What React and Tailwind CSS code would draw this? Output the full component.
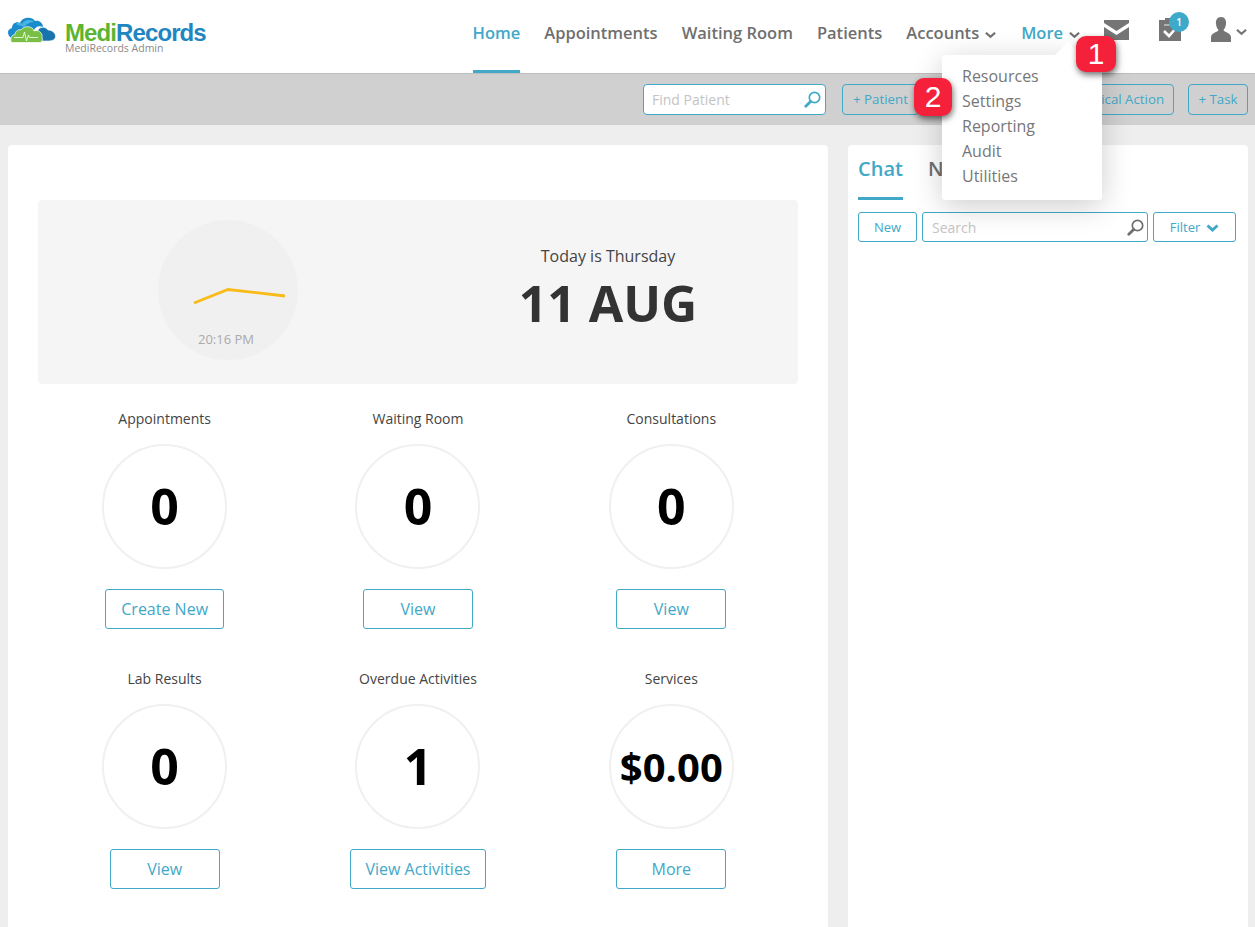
import React from "react";

const Chevron = ({ className = "", sw = 2.4 }) => (
  <svg viewBox="0 0 12 8" className={className} fill="none" stroke="currentColor" strokeWidth={sw}>
    <path d="M1 1.5 L6 6 L11 1.5" />
  </svg>
);

const Magnifier = ({ color, className = "" }) => (
  <svg viewBox="0 0 17 17" className={className} fill="none">
    <circle cx="10.5" cy="6.5" r="5.2" stroke={color} strokeWidth="1.7" />
    <path d="M6.6 10.4 L1.8 15.2" stroke={color} strokeWidth="2.8" strokeLinecap="round" />
  </svg>
);

const Logo = () => (
  <div className="flex items-start w-[206px] shrink-0">
    <svg viewBox="0 0 48 26" className="w-[48px] h-[26px] ml-[8px] mt-[17px] shrink-0">
      <path d="M30 13 C33 9 38 10 40 13 C44 13 48 16 47.5 20 C47 23 44 24 40 24 L28 24Z" fill="#1774ad" stroke="#fff" strokeWidth="0.6" />
      <path d="M1 19 C-1 15 0 12 4 11 C4 6 9 4 12 6 C14 0 24 -1 27 4 C31 3 35 6 35 10 C30 8 27 11 26 13 L8 21 L3 21Z" fill="#1b8ccb" />
      <path d="M8 7 C11 5 13 6 14 7 C16 2 24 2 26 5 C22 5 18 7 16 10 C13 8 10 9 8 7Z" fill="#49b4e4" />
      <path d="M4 25.5 C2 25 2 18 7 17.5 C7 14 11 12 13 13 C16 8 25 9 26 14 C30 12 35 16 34 20 C35 23 34 25.5 32 25.5Z" fill="#7abf45" stroke="#fff" strokeWidth="0.7" />
      <path d="M6 20.5 H13 L15 20.5 L16.5 15 L18.5 24 L20.5 18 L21.5 20.5 H30" fill="none" stroke="#eef8e6" strokeWidth="0.9" />
    </svg>
    <div className="ml-[9px] mt-[20px]">
      <div className="font-['Liberation_Sans',sans-serif] font-bold text-[24px] leading-[26px] tracking-[-0.9px] whitespace-nowrap">
        <span className="text-[#5cb531]">Medi</span>
        <span className="text-[#1f86c0]">Records</span>
      </div>
      <div className="text-[10.5px] leading-[10px] text-[#8a8a8a] whitespace-nowrap -mt-[3px]">MediRecords Admin</div>
    </div>
  </div>
);

const NavItem = ({ label, active, chevron, className = "" }) => (
  <div className={`relative h-[73px] pb-[6px] flex items-center whitespace-nowrap text-[16.5px] font-semibold ${active ? "text-[#41a8c8]" : "text-[#6f6f6f]"} ${className}`}>
    <span>{label}</span>
    {chevron && <Chevron className="w-[11px] h-[8px] ml-[6px] mt-[2px] text-[#6f6f6f]" />}
    {label === "Home" && <div className="absolute left-0 right-0 bottom-0 h-[3px] bg-[#41a8c8]" />}
  </div>
);

const ToolBtn = ({ children, className = "" }) => (
  <div className={`h-[31px] flex items-center justify-center rounded-[4px] border border-[#41a8c8] text-[#41a8c8] text-[13.3px] whitespace-nowrap ${className}`}>
    {children}
  </div>
);

const Stat = ({ title, value, action, btn, small }) => (
  <div className="flex flex-col items-center h-[260px]">
    <div className="text-[14px] leading-[20px] text-[#444] h-[20px]">{title}</div>
    <div className={`mt-[15px] w-[125px] h-[125px] rounded-full border-2 border-[#f0f0f0] flex items-center justify-center font-bold text-black whitespace-nowrap ${small ? "text-[40px]" : "text-[50px]"}`}>
      {value}
    </div>
    <div className={`mt-[20px] h-[40px] flex items-center justify-center rounded-[3px] border border-[#41a8c8] text-[#41a8c8] text-[16px] ${btn}`}>
      {action}
    </div>
  </div>
);

const stats = [
  { title: "Appointments", value: "0", action: "Create New", btn: "w-[119px]" },
  { title: "Waiting Room", value: "0", action: "View", btn: "w-[110px]" },
  { title: "Consultations", value: "0", action: "View", btn: "w-[110px]" },
  { title: "Lab Results", value: "0", action: "View", btn: "w-[110px]" },
  { title: "Overdue Activities", value: "1", action: "View Activities", btn: "w-[136px]" },
  { title: "Services", value: "$0.00", action: "More", btn: "w-[110px]", small: true },
];

const Callout = ({ n, className }) => (
  <div className={`absolute z-30 flex items-center justify-center rounded-[10px] bg-[#f5213a] text-white text-[30px] leading-none shadow-[1px_3px_6px_rgba(0,0,0,0.55)] font-['Liberation_Sans',sans-serif] ${className}`}>
    {n}
  </div>
);

export default function App() {
  return (
    <div className="relative w-[1255px] h-[927px] overflow-hidden bg-[#eeeeee] font-['Open_Sans',sans-serif]">
      <header className="h-[74px] bg-white border-b border-[#bdbdbd] flex">
        <Logo />
        <nav className="flex ml-[266.5px] gap-[24px]">
          <NavItem label="Home" active />
          <NavItem label="Appointments" />
          <NavItem label="Waiting Room" />
          <NavItem label="Patients" />
          <NavItem label="Accounts" chevron />
          <NavItem label="More" active chevron className="ml-[1px]" />
        </nav>
        <div className="relative flex-1">
          <svg viewBox="0 0 25 20" className="absolute left-[24px] top-[20px] w-[25px] h-[20px]">
            <rect width="25" height="20" fill="#757575" />
            <path d="M0 3 L12.5 11 L25 3 V7 L12.5 15 L0 7Z" fill="#fff" />
          </svg>
          <svg viewBox="0 0 22 23" className="absolute left-[79px] top-[18px] w-[22px] h-[23px]">
            <path d="M0 2 H6 V0 H14 V2 H22 V23 H0Z" fill="#757575" />
            <path d="M5 7 H17" stroke="#d8d8d8" strokeWidth="1.2" />
            <path d="M5 13 L10 18 L17 10" fill="none" stroke="#fff" strokeWidth="2.6" />
          </svg>
          <div className="absolute left-[89px] top-[12px] w-[20px] h-[20px] rounded-full bg-[#3fa9c9] text-white text-[10px] font-semibold flex items-center justify-center">1</div>
          <svg viewBox="0 0 20 25" className="absolute left-[131px] top-[17px] w-[20px] h-[25px]">
            <path d="M10 0 C14 0 15.5 3.5 15 7 C14.7 10 13.5 12 12.5 13 C13 15 20 16 20 20 V25 H0 V20 C0 16 7 15 7.5 13 C6.5 12 5.3 10 5 7 C4.5 3.5 6 0 10 0Z" fill="#757575" />
          </svg>
          <Chevron className="absolute left-[156px] top-[28px] w-[11px] h-[8px] text-[#757575]" />
        </div>
      </header>

      <div className="h-[51px] bg-[#d0d0d0] flex items-start justify-end pt-[10px] pr-[7px] gap-[14px]">
        <div className="h-[31px] w-[183px] mr-[2px] bg-white rounded-[4px] border border-[#41a8c8] flex items-center pl-[8px] pr-[4px]">
          <span className="flex-1 text-[14px] text-[#c4c4c4]">Find Patient</span>
          <Magnifier color="#41a8c8" className="w-[17px] h-[17px]" />
        </div>
        <ToolBtn className="w-[77px]">+ Patient</ToolBtn>
        <ToolBtn className="w-[93px]">+ Contact</ToolBtn>
        <ToolBtn className="w-[134px] pl-[17px]">+ Clinical Action</ToolBtn>
        <ToolBtn className="w-[60px]">+ Task</ToolBtn>
      </div>

      <main className="flex gap-[20px] pt-[20px] pl-[8px] pr-[7px]">
        <section className="w-[820px] h-[800px] bg-white rounded-t-[4px] pt-[55px] px-[30px]">
          <div className="h-[184px] rounded-[4px] bg-[#f5f5f5] grid grid-cols-2 items-start pt-[20px]">
            <div className="flex justify-center">
              <div className="relative w-[140px] h-[140px] rounded-full bg-[#f0f0f0]">
                <svg viewBox="0 0 140 140" className="absolute inset-0 w-[140px] h-[140px]" fill="none" stroke="#f9bb18" strokeWidth="2.8">
                  <path d="M36 83 L70 69.5 L127 76" />
                </svg>
                <div className="absolute left-0 right-[4px] top-[110px] text-center text-[13px] leading-[18px] text-[#aaaaaa]">20:16 PM</div>
              </div>
            </div>
            <div className="text-center">
              <div className="text-[16px] leading-[22px] text-[#444] mt-[25px]">Today is Thursday</div>
              <div className="text-[50px] leading-[60px] font-bold text-[#333] mt-[6px]">11 AUG</div>
            </div>
          </div>
          <div className="grid grid-cols-3 mt-[25px]">
            {stats.map((s) => (
              <Stat key={s.title} {...s} />
            ))}
          </div>
        </section>

        <aside className="w-[400px] h-[800px] bg-white rounded-t-[4px] px-[10px]">
          <div className="flex gap-[25px] h-[55px]">
            <div className="h-[55px] border-b-[3px] border-[#41a8c8] text-[20px] leading-[48px] font-semibold text-[#41a8c8]">Chat</div>
            <div className="text-[20px] leading-[48px] font-semibold text-[#6f6f6f]">Notes</div>
          </div>
          <div className="flex gap-[5px] mt-[12px] w-[378px]">
            <div className="w-[59px] h-[30px] pt-[1px] rounded-[3px] border border-[#41a8c8] text-[#41a8c8] text-[13px] flex items-center justify-center">New</div>
            <div className="w-[226px] h-[30px] rounded-[3px] border border-[#41a8c8] flex items-center pl-[9px] pr-[3px]">
              <span className="flex-1 text-[14px] text-[#c4c4c4]">Search</span>
              <Magnifier color="#6f6f6f" className="w-[17px] h-[17px]" />
            </div>
            <div className="w-[83px] h-[30px] pt-[1px] rounded-[3px] border border-[#41a8c8] text-[#41a8c8] text-[13px] flex items-center justify-center gap-[6px]">
              Filter
              <Chevron className="w-[13px] h-[8px]" sw={3} />
            </div>
          </div>
        </aside>
      </main>

      <div className="absolute z-20 left-[942px] top-[55px] w-[160px] h-[145px] rounded-[3px] bg-white pl-[20px] pt-[9px] text-[16px] leading-[25px] text-[#777777] shadow-[0_6px_30px_rgba(0,0,0,0.2)]">
        <div>Resources</div>
        <div>Settings</div>
        <div>Reporting</div>
        <div>Audit</div>
        <div>Utilities</div>
        <div className="absolute left-[113px] -top-[13px] w-0 h-0 border-l-[13px] border-l-transparent border-r-[13px] border-r-transparent border-b-[13px] border-b-white" />
      </div>
      <Callout n="1" className="left-[1076px] top-[36px] w-[40px] h-[36px]" />
      <Callout n="2" className="left-[914px] top-[78px] w-[38px] h-[38px]" />
    </div>
  );
}
